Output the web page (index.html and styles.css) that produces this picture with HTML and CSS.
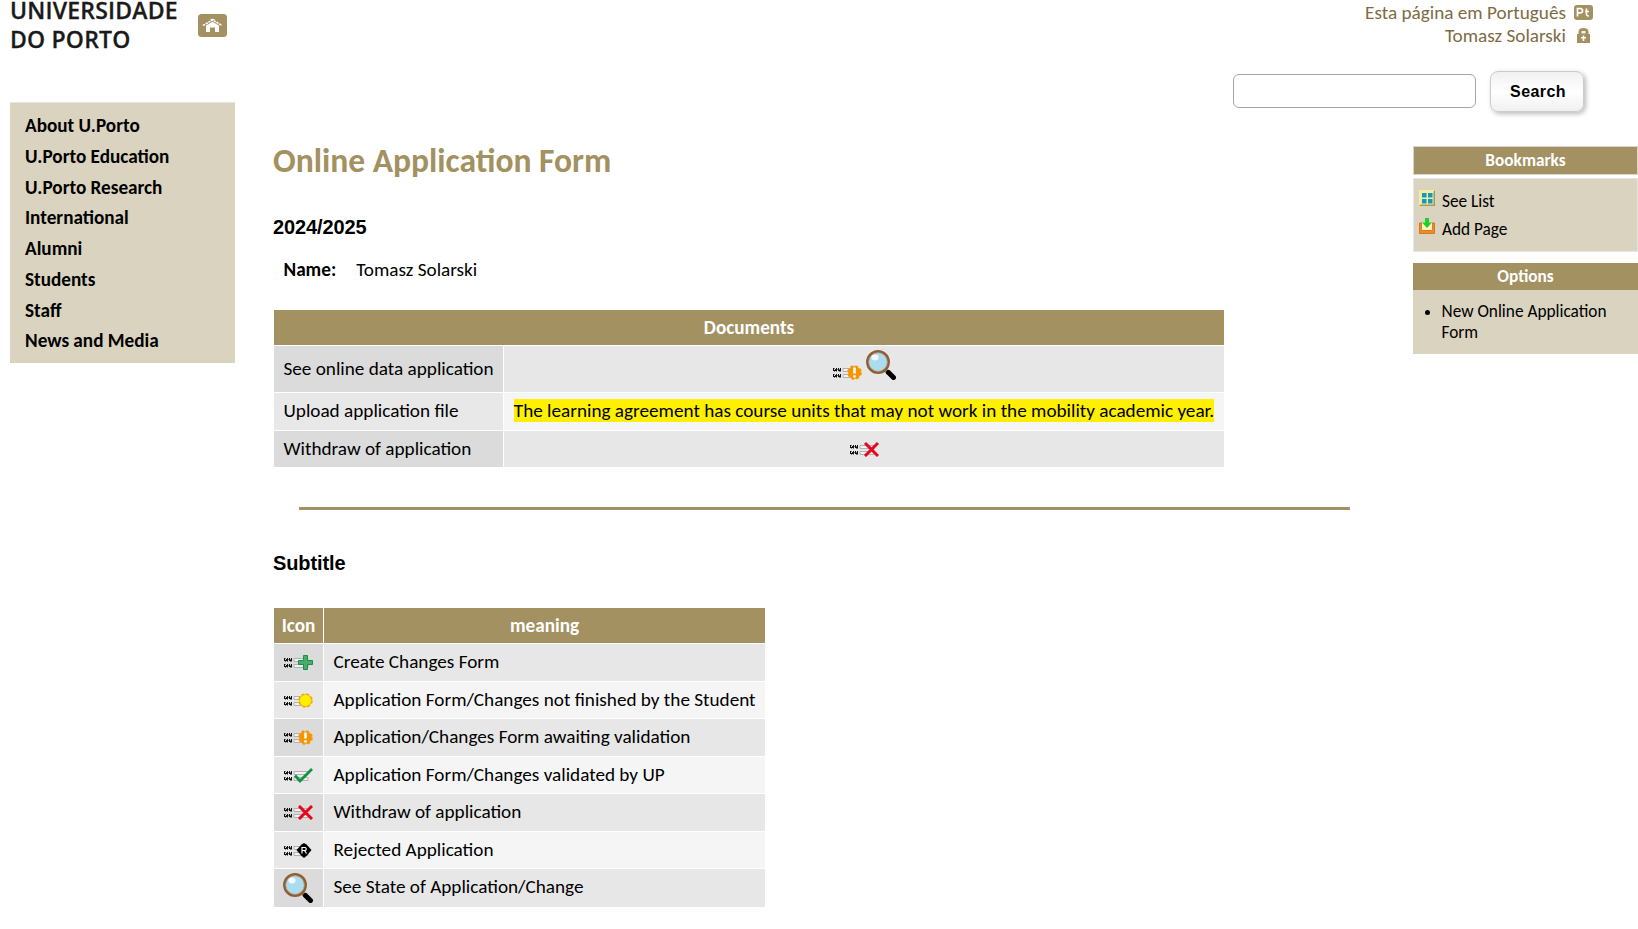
FILE: index.html
```
<!DOCTYPE html>
<html lang="en">
<head>
<meta charset="utf-8">
<title>Online Application Form</title>
<link rel="stylesheet" href="styles.css">
</head>
<body>
<svg class="defs" width="0" height="0">
  <defs>
    <symbol id="ww" viewBox="0 0 9 4">
      <path d="M0 0h1v2H0zM2 1h1v1H2zM3 0h1v2H3zM5 0h1v2H5zM7 0h1v2H7zM0 2h4v1H0zM5 2h3v1H5z" fill="#111"/>
      <path d="M1 0h1v1H1zM4 1h1v1H4zM6 1h1v1H6zM1 3h1v1H1zM3 3h1v1H3zM6 3h2v1H6z" fill="#777"/>
    </symbol>
    <symbol id="base" viewBox="0 0 29 15">
      <use href="#ww" x="0" y="3" width="9" height="4"/>
      <use href="#ww" x="0" y="9" width="9" height="4"/>
      <path d="M10 3.500h14v3H10zM10 9.500h14v3H10z" fill="#f2f2f2" stroke="#b0b0b0"/>
    </symbol>
    <symbol id="plus" viewBox="0 0 29 15"><use href="#base"/><path d="M19.500.5h4v5h5v4h-5v5h-4v-5h-5v-4h5z" fill="#4cab68" stroke="#12924a"/></symbol>
    <symbol id="dot" viewBox="0 0 29 15"><use href="#base"/><circle cx="21.500" cy="7.500" r="6.500" fill="#fff000" stroke="#f7a000" stroke-width="1.500" stroke-dasharray="3 2.100"/><circle cx="21.500" cy="7.500" r="6" fill="#fff000" stroke="#f9a800" stroke-width=".8"/></symbol>
    <symbol id="warn" viewBox="0 0 29 15"><use href="#base"/><circle cx="21.500" cy="7.500" r="6.300" fill="#f79400"/><circle cx="21.500" cy="7.500" r="6.500" fill="none" stroke="#f79400" stroke-width="1.600" stroke-dasharray="3 2.100"/><path d="M20.200 2.500h2.600v6h-2.600zM20.200 10.200h2.600v2.300h-2.600z" fill="#fff"/></symbol>
    <symbol id="check" viewBox="0 0 29 15"><use href="#base"/><path d="M11 7.500l5 5.500L28 1" fill="none" stroke="#0c9444" stroke-width="2.800"/></symbol>
    <symbol id="cross" viewBox="0 0 29 15"><use href="#base"/><path d="M15 1l13 13M28 1L15 14" fill="none" stroke="#e8061f" stroke-width="3"/></symbol>
    <symbol id="reject" viewBox="0 0 29 15"><use href="#base"/><path d="M20 0l2.500 1.500L27.500 7 22.500 13 20 15l-2.500-2L12.500 7l5-5.500z" fill="#000"/><path d="M18 10.500v-6h3.200q1 .2 1 1.500t-1 1.500H18.500M20.500 7.500l2 3" fill="none" stroke="#fff" stroke-width="1.200"/></symbol>
    <symbol id="lens" viewBox="0 0 30 30">
      <path d="M18.500 19.500l4 3.500" stroke="#b9824c" stroke-width="4"/>
      <path d="M22.500 22.500l5 5" stroke="#000" stroke-width="5" stroke-linecap="round"/>
      <circle cx="12" cy="12" r="10.600" fill="#abdcf0" stroke="#8b5f37" stroke-width="2.700"/>
      <circle cx="12" cy="12" r="9.300" fill="none" stroke="#c4a27f" stroke-width=".8"/>
      <ellipse cx="9" cy="7.500" rx="3.600" ry="3" fill="#fff" opacity=".85"/>
    </symbol>
  </defs>
</svg>
<header class="top">
  <div class="brand">
    <div class="logo">UNIVERSIDADE<br>DO PORTO</div>
    <svg class="home" viewBox="0 0 29 23"><rect width="29" height="23" rx="3.500" fill="#a39161"/><path d="M5 11.500l9.500-5.500 9.500 5.500" fill="none" stroke="#fff" stroke-width="1.500" stroke-dasharray="2.400 .7"/><path d="M12.500 5.500h4" stroke="#fff" stroke-width="1.200"/><path d="M8 18v-6.500l6.500-3.700 6.500 3.700V18h-4v-4.500h-5V18z" fill="#fff"/></svg>
  </div>
  <div class="tools">
    <div class="userline">Esta página em Português<svg class="pt" viewBox="0 0 19 15"><rect width="19" height="15" rx="3" fill="#a39161"/><path d="M3.500 11.500v-8h3q2 .3 2 2.200t-2 2.200H4M12.500 3.500v6q.2 1.500 2.500 1.500M11 6.500h4" fill="none" stroke="#fff" stroke-width="1.700"/></svg></div>
    <div class="userline">Tomasz Solarski<svg class="pt" viewBox="0 0 19 15"><path d="M4.500 6V4q0-4 5-4t5 4v2h1.500v9H3V6z" fill="#a39161"/><path d="M7.500 5.500V3h4v2.500z" fill="#f4f0e4"/><path d="M8.700 7.500h1.600V9h1.700v1.500h-1.700V13H8.700v-2.500H7V9h1.700z" fill="#fff"/></svg></div>
    <form class="search"><input class="field" type="text" aria-label="Search"><button class="btn" type="button">Search</button></form>
  </div>
</header>
<div class="body">
  <nav class="nav">
    <a>About U.Porto</a>
    <a>U.Porto Education</a>
    <a>U.Porto Research</a>
    <a>International</a>
    <a>Alumni</a>
    <a>Students</a>
    <a>Staff</a>
    <a>News and Media</a>
  </nav>
  <main class="main">
    <h1 class="title">Online Application Form</h1>
    <h2 class="sub">2024/2025</h2>
    <div class="person"><b>Name:</b><span>Tomasz Solarski</span></div>
    <table class="grid docs">
      <colgroup><col class="narrow"><col></colgroup>
      <tr><th colspan="2">Documents</th></tr>
      <tr class="h46"><td class="key">See online data application</td><td class="mid"><span class="icons"><svg class="ic"><use href="#warn"/></svg><svg class="lens"><use href="#lens"/></svg></span></td></tr>
      <tr class="h37 alt"><td class="key">Upload application file</td><td class="mid"><mark>The learning agreement has course units that may not work in the mobility academic year.</mark></td></tr>
      <tr class="h36"><td class="key">Withdraw of application</td><td class="mid"><svg class="ic"><use href="#cross"/></svg></td></tr>
    </table>
    <hr class="rule">
    <h2 class="sub second">Subtitle</h2>
    <table class="grid legend">
      <tr><th>Icon</th><th>meaning</th></tr>
      <tr class="h37"><td class="key"><svg class="ic"><use href="#plus"/></svg></td><td>Create Changes Form</td></tr>
      <tr class="h36 alt"><td class="key"><svg class="ic"><use href="#dot"/></svg></td><td>Application Form/Changes not finished by the Student</td></tr>
      <tr class="h37"><td class="key"><svg class="ic"><use href="#warn"/></svg></td><td>Application/Changes Form awaiting validation</td></tr>
      <tr class="h36 alt"><td class="key"><svg class="ic"><use href="#check"/></svg></td><td>Application Form/Changes validated by UP</td></tr>
      <tr class="h37"><td class="key"><svg class="ic"><use href="#cross"/></svg></td><td>Withdraw of application</td></tr>
      <tr class="h36 alt"><td class="key"><svg class="ic"><use href="#reject"/></svg></td><td>Rejected Application</td></tr>
      <tr class="h38"><td class="key"><svg class="lens"><use href="#lens"/></svg></td><td>See State of Application/Change</td></tr>
    </table>
  </main>
  <aside class="side">
    <h3 class="cap edged">Bookmarks</h3>
    <div class="marks">
      <div class="mark"><svg viewBox="0 0 16 16"><path d="M0 0h16v16H0z" fill="#f4eca0"/><path d="M16 0v16H0l1.500-1.500h13v-13z" fill="#a59a5a"/><path d="M3 3h4.500v4.500H3zM9 3h4.500v4.500H9zM3 9h4.500v4.500H3zM9 9h4.500v4.500H9z" fill="#1398c4"/></svg><span>See List</span></div>
      <div class="mark"><svg viewBox="0 0 16 16"><path d="M.5 5H3v7h10V5h2.500v10.500H.5z" fill="#f08a28" stroke="#cf6a10" stroke-width=".8"/><path d="M3 5h10v7H3z" fill="#fff5c0"/><path d="M6 0h4v4.500h3L8 10 3 4.500h3z" fill="#1fd02b"/></svg><span>Add Page</span></div>
    </div>
    <h3 class="cap">Options</h3>
    <ul class="opts"><li>New Online Application<br>Form</li></ul>
  </aside>
</div>
</body>
</html>
```
FILE: styles.css
```
* { box-sizing: border-box; }
body { margin: 0; background: #fff; color: #000; font: 19.200px/21px Calibri, Carlito, Lato, "Liberation Sans", sans-serif; width: 1638px; height: 929px; overflow: hidden; }
.defs { position: absolute; }
.top { display: flex; justify-content: space-between; height: 102px; }
.brand { display: flex; padding-left: 10px; }
.logo { width: 188px; font-family: "Open Sans", "Noto Sans", sans-serif; font-size: 23px; font-weight: 600; line-height: 28.300px; margin-top: -3.700px; letter-spacing: .2px; color: #1a1a1a; -webkit-text-stroke: .3px #1a1a1a; }
.home { width: 29px; height: 23px; margin-top: 14px; }
.tools { width: 405px; padding-right: 45px; }
.userline { display: flex; align-items: center; justify-content: flex-end; gap: 8px; height: 23px; color: #7d6b43; }
.userline:first-child { margin-top: 1px; }
.pt { width: 19px; height: 15px; }
.search { display: flex; align-items: center; gap: 14px; margin: 24px 0 0; height: 41px; }
.field { width: 243px; height: 34px; margin-bottom: 1px; border: 1px solid #a6a6a6; border-radius: 6px; background: #fff; }
.btn { width: 94px; height: 41px; padding: 0 0 0 2px; border: 1px solid #ccc; border-radius: 8px; background: linear-gradient(#f0f0f0, #fff 50%, #f0f0f0); box-shadow: 2px 2px 5px #bbb; font: bold 16px "Liberation Sans", Arial, sans-serif; letter-spacing: .4px; color: #000; }
.body { display: flex; align-items: flex-start; padding-left: 10px; }
.nav { flex: none; width: 225px; height: 261px; padding: 8.400px 15px 0; border-top: 1px solid #e6e6e6; background: #dad3bf; font-weight: 700; }
.nav a { display: block; height: 30.700px; line-height: 30.700px; }
.main { flex: none; width: 1178px; padding-left: 38px; }
.title { margin: 40px 0 0; font-size: 33.600px; line-height: 38px; color: #a39161; }
.sub { margin: 36px 0 0; font: bold 20px/22px "Liberation Sans", Arial, sans-serif; letter-spacing: -.1px; }
.second { margin-top: 42px; }
.person { display: flex; gap: 20px; margin: 21px 0 0 10.500px; height: 22px; }
.grid { border-spacing: 1px; border-collapse: separate; margin: 28px 0 0; }
.grid th { height: 35px; padding: 0; background: #a39161; color: #fff; }
.grid td { padding: 0 9px 2px 9.500px; background: #e7e7e7; }
.grid td.mid { padding: 0 9px; }
.grid td.key { background: #dbdbdb; }
.grid .alt td { background: #f5f5f5; }
.grid .alt td.key { background: #e8e8e8; }
.grid .h38 td { padding-bottom: 4px; }
.docs { width: 952px; table-layout: fixed; }
.narrow { width: 229px; }
.docs .mid { text-align: center; white-space: nowrap; }
.docs .alt td.mid { padding-bottom: 2px; }
.legend { width: 493px; margin-top: 33px; table-layout: fixed; }
.legend td { white-space: nowrap; }
.grid.legend td.key { padding: 0 9px; }
.legend th:first-child { width: 49px; }
.h46 { height: 46px; } .h38 { height: 38px; } .h37 { height: 37px; } .h36 { height: 36px; }
.ic { display: block; width: 29px; height: 15px; margin-left: 1px; }
.lens { display: block; width: 30px; height: 30px; }
.docs .mid > .ic { margin: 0 0 0 337px; }
.icons { display: flex; justify-content: center; align-items: flex-end; gap: 4px; padding-bottom: 8px; }
.icons .ic { margin-left: 0; }
mark { background: #fff000; color: #000; }
.rule { width: 1051px; height: 3px; margin: 39px 0 0 26px; border: 0; background: #a39161; }
.side { flex: none; width: 225px; margin-top: 44px; font-size: 17.280px; }
.cap { margin: 0; height: 27px; line-height: 27px; text-align: center; background: #a39161; color: #fff; font-size: 17.280px; }
.edged { height: 29px; border: 1px solid #d9d4d0; }
.marks { margin: 3px 0 11px; height: 74px; border: 1px solid #e6e6e6; background: #dad3bf; padding: 12px 5px; }
.mark { display: flex; gap: 7px; height: 28px; align-items: flex-start; }
.mark svg { width: 16px; height: 16px; margin-top: -1px; }
.opts { margin: 0; height: 64px; padding: 11px 0 0 28.500px; background: #dad3bf; }
```
